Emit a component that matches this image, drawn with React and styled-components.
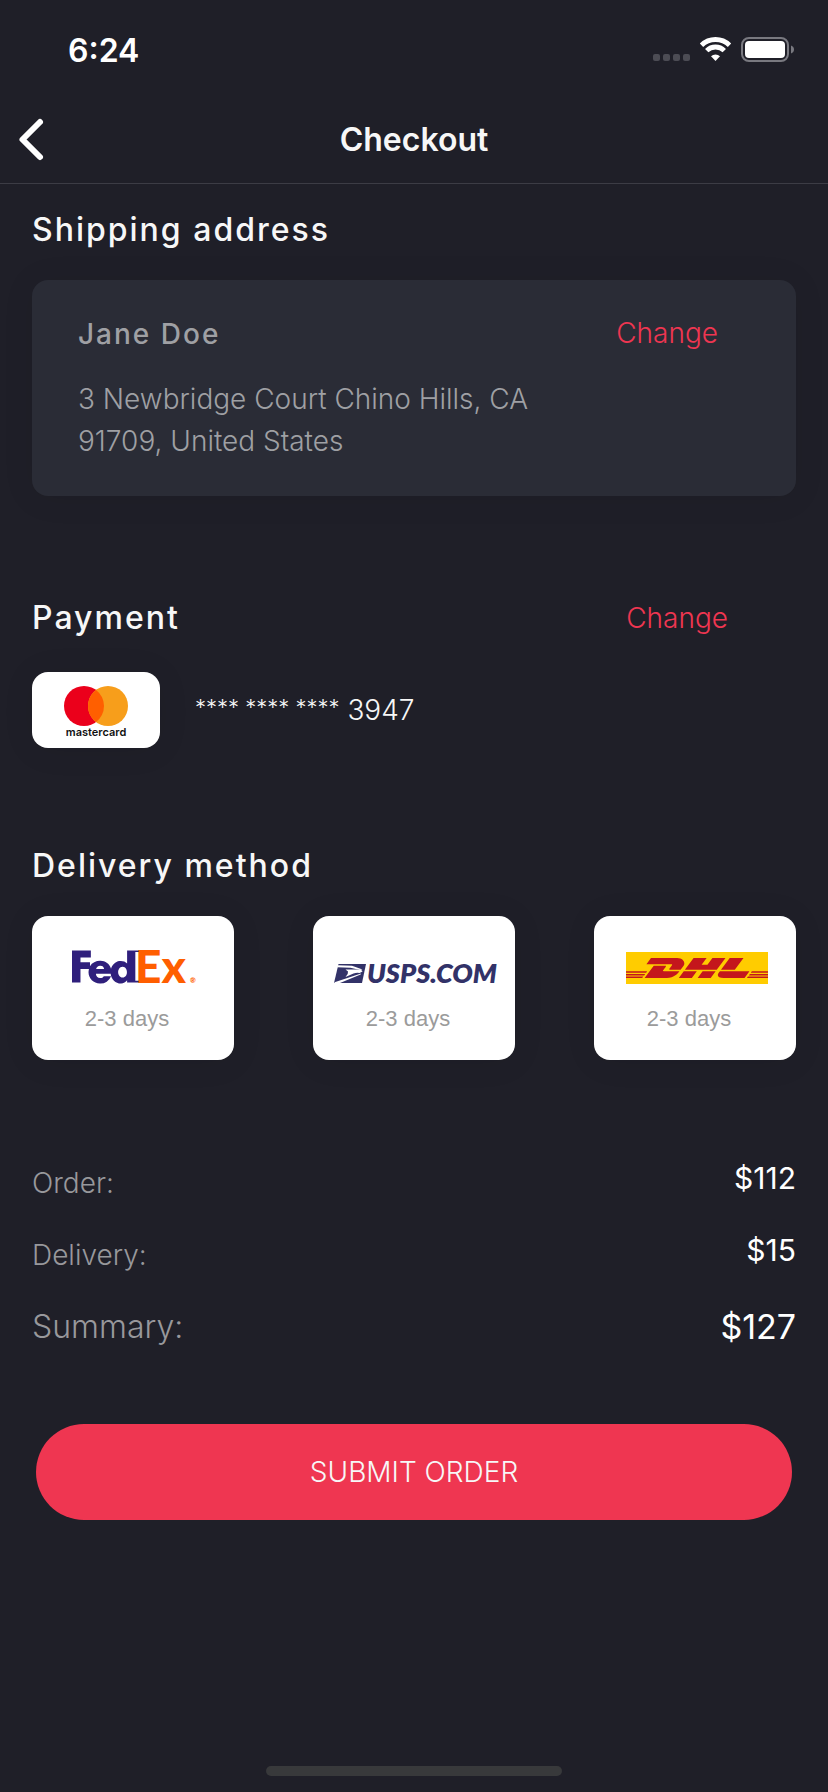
import React from "react";
import styled, { createGlobalStyle } from "styled-components";
import { SiDhl, SiFedex } from "react-icons/si";

const GlobalStyle = createGlobalStyle`
  *, *::before, *::after { box-sizing: border-box; }
  body {
    margin: 0;
    background: #1f1f28;
    color: #f7f7f7;
    font-family: Inter, "Liberation Sans", sans-serif;
  }
  h1, h2, p, dl, dt, dd { margin: 0; }
  button { padding: 0; border: 0; background: none; color: inherit; font: inherit; cursor: pointer; }
`;

const Screen = styled.div`
  display: flex;
  flex-direction: column;
  min-height: 100vh;
`;

const StatusBar = styled.div`
  display: flex;
  align-items: center;
  justify-content: space-between;
  height: 96px;
  padding: 4px 34px 0 68px;
  font-size: 32px;
  font-weight: 600;
  color: #fff;
`;

const StatusIcons = styled.svg`
  width: 142px;
  height: 28px;
`;

const Header = styled.header`
  display: grid;
  grid-template-columns: 64px 1fr 64px;
  align-items: center;
  height: 88px;
  border-bottom: 1px solid #3c3c45;
`;

const BackButton = styled.button`
  display: flex;
  align-items: center;
  height: 64px;
  padding-left: 16px;
`;

const Title = styled.h1`
  font-size: 32px;
  font-weight: 600;
  line-height: 40px;
  text-align: center;
`;

const Main = styled.main`
  display: flex;
  flex-direction: column;
  padding: 26px 32px 24px;
`;

const Section = styled.section`
  display: flex;
  flex-direction: column;
  gap: ${(p) => p.$gap || 30}px;
  margin-bottom: ${(p) => p.$after}px;
`;

const SectionHead = styled.div`
  display: flex;
  align-items: center;
  justify-content: space-between;
  padding-right: 68px;
`;

const SectionTitle = styled.h2`
  font-size: 32px;
  font-weight: 500;
  line-height: 40px;
  letter-spacing: 2px;
`;

const ChangeButton = styled.button`
  color: #ef3651;
  font-size: 28px;
  font-weight: 300;
  line-height: 34px;
`;

const AddressCard = styled.div`
  display: flex;
  flex-direction: column;
  gap: 26px;
  padding: 36px 78px 34px 46px;
  border-radius: 16px;
  background: #2a2c36;
  color: #9fa0a4;
  font-size: 28px;
  box-shadow: 0 2px 32px rgba(0, 0, 0, 0.08);
`;

const AddressTop = styled.div`
  display: flex;
  align-items: flex-start;
  justify-content: space-between;
`;

const Name = styled.p`
  font-weight: 500;
  line-height: 36px;
  letter-spacing: 2px;
`;

const Address = styled.p`
  max-width: 480px;
  font-weight: 300;
  line-height: 42px;
`;

const PaymentRow = styled.div`
  display: flex;
  align-items: center;
  gap: 35px;
`;

const PaymentCard = styled.div`
  display: flex;
  width: 128px;
  height: 76px;
  border-radius: 16px;
  background: #fff;
  box-shadow: 0 2px 32px rgba(0, 0, 0, 0.08);
`;

const CardNumber = styled.p`
  font-size: 28px;
  font-weight: 300;
  line-height: 36px;
`;

const Mask = styled.span`
  font-size: 22px;
  line-height: 30px;
  vertical-align: top;
`;

const Options = styled.div`
  display: flex;
  justify-content: space-between;
`;

const Option = styled.button`
  display: flex;
  flex-direction: column;
  align-items: center;
  width: 202px;
  height: 144px;
  border-radius: 16px;
  background: #fff;
  box-shadow: 0 2px 32px rgba(0, 0, 0, 0.08);
`;

const Logo = styled.svg`
  width: 202px;
  height: 88px;
`;

const Days = styled.span`
  padding-right: 12px;
  color: #9b9b9b;
  font: 22px/30px "Liberation Sans", Arial, sans-serif;
`;

const Totals = styled.dl`
  display: flex;
  flex-direction: column;
  gap: 30px;
  margin-bottom: 76px;
`;

const TotalRow = styled.div`
  display: flex;
  align-items: flex-start;
  justify-content: space-between;
  font-weight: 300;

  dt {
    color: #98989c;
    font-size: ${(p) => (p.$final ? 32 : 28)}px;
    line-height: 42px;
  }
  dd {
    color: #fff;
    font-size: ${(p) => (p.$final ? 34 : 30)}px;
    font-weight: 400;
    line-height: ${(p) => (p.$final ? 42 : 32)}px;
  }
`;

const SubmitButton = styled.button`
  height: 96px;
  margin: 0 4px;
  border-radius: 48px;
  background: #ef3651;
  color: #f7f7f7;
  font-size: 28px;
  font-weight: 300;
`;

const HomeBar = styled.div`
  width: 296px;
  height: 10px;
  margin: auto auto 16px;
  border-radius: 5px;
  background: #38393b;
`;

function FedexLogo() {
  return (
    <Logo viewBox="0 0 202 88" aria-label="FedEx">
      <svg x="40" y="0" width="67" height="88" overflow="hidden">
        <SiFedex x="0" y="-10" size={122} fill="#2f1f7c" />
      </svg>
      <g fontFamily="Lato, sans-serif" fontWeight="900" fill="#ff5e00">
        <text x="103" y="67" fontSize="46">
          Ex
        </text>
        <text x="158" y="67" fontSize="7">
          ®
        </text>
      </g>
    </Logo>
  );
}

function UspsLogo() {
  return (
    <Logo viewBox="0 0 202 88" fill="#323268">
      <path d="M25.500 48h27.500l-4 19h-28z" />
      <g fill="#fff">
        <path d="M25 49.200l14 .6 10.500 3.700-2.500.4-9.500-2.200-13.500-.4z" />
        <path d="M32.500 53.600h11.500q5 0 5.500 1.800l-3 1.600q-3-.6-6 .6l-8 3.400q3-2.600 2.500-5.400z" />
        <path d="M21.500 66.200L48 57.400l-.4 1.200L27 67h-5.500z" />
      </g>
      <text x="54" y="67" fontFamily="Lato, sans-serif" fontSize="27" fontWeight="800" fontStyle="italic">
        USPS.COM
      </text>
    </Logo>
  );
}

function DhlLogo() {
  return (
    <Logo viewBox="0 0 202 88" aria-label="DHL">
      <rect x="32" y="36" width="142" height="32" fill="#fc0" />
      <SiDhl x="32" y="-19" size={142} fill="#c4161c" />
    </Logo>
  );
}

const carriers = [
  { name: "FedEx", Mark: FedexLogo },
  { name: "USPS", Mark: UspsLogo },
  { name: "DHL", Mark: DhlLogo },
];

export default function App() {
  return (
    <Screen>
      <GlobalStyle />
      <StatusBar>
        <span>6:24</span>
        <StatusIcons viewBox="0 0 142 28" aria-hidden="true">
          <g fill="#4c4c54">
            <rect x="1" y="18" width="7" height="7" rx="2" />
            <rect x="11" y="18" width="7" height="7" rx="2" />
            <rect x="21" y="18" width="7" height="7" rx="2" />
            <rect x="31" y="18" width="7" height="7" rx="2" />
          </g>
          <g fill="none" stroke="#fff" strokeWidth="4.8">
            <path d="M49.5 9.2a20 20 0 0 1 28 0" />
            <path d="M54.7 14.6a12.6 12.6 0 0 1 17.6 0" />
          </g>
          <path d="M59 20.3a6.6 6.6 0 0 1 9 0L63.5 25z" fill="#fff" />
          <rect x="90" y="2" width="46" height="23" rx="7" fill="none" stroke="#797980" strokeWidth="2" />
          <rect x="93" y="5" width="40" height="17" rx="4" fill="#fff" />
          <path d="M139 9.5c4 1.2 4 6.8 0 8z" fill="#797980" />
        </StatusIcons>
      </StatusBar>

      <Header>
        <BackButton aria-label="Back">
          <svg width="32" height="48" viewBox="0 0 32 48" fill="none" stroke="#fff" strokeWidth="6" strokeLinecap="round" strokeLinejoin="round">
            <path d="M24 6L6.5 23.5L24 41" />
          </svg>
        </BackButton>
        <Title>Checkout</Title>
      </Header>

      <Main>
        <Section $after={102}>
          <SectionTitle>Shipping address</SectionTitle>
          <AddressCard>
            <AddressTop>
              <Name>Jane Doe</Name>
              <ChangeButton>Change</ChangeButton>
            </AddressTop>
            <Address>
              3 Newbridge Court Chino Hills, CA
              <br />
              91709, United States
            </Address>
          </AddressCard>
        </Section>

        <Section $gap={34} $after={98}>
          <SectionHead>
            <SectionTitle>Payment</SectionTitle>
            <ChangeButton>Change</ChangeButton>
          </SectionHead>
          <PaymentRow>
            <PaymentCard>
              <svg width="128" height="76" viewBox="0 0 128 76">
                <circle cx="52" cy="34" r="20" fill="#eb001b" />
                <circle cx="76" cy="34" r="20" fill="#f79e1b" />
                <path d="M64 18a20 20 0 0 1 0 32a20 20 0 0 1 0-32z" fill="#ff5f00" />
                <text x="64" y="64" textAnchor="middle" fontFamily="Inter, sans-serif" fontSize="11" fontWeight="600" fill="#111">
                  mastercard
                </text>
              </svg>
            </PaymentCard>
            <CardNumber>
              <Mask>**** **** ****</Mask> 3947
            </CardNumber>
          </PaymentRow>
        </Section>

        <Section $after={102}>
          <SectionTitle>Delivery method</SectionTitle>
          <Options>
            {carriers.map(({ name, Mark }) => (
              <Option key={name}>
                <Mark />
                <Days>2-3 days</Days>
              </Option>
            ))}
          </Options>
        </Section>

        <Totals>
          <TotalRow>
            <dt>Order:</dt>
            <dd>$112</dd>
          </TotalRow>
          <TotalRow>
            <dt>Delivery:</dt>
            <dd>$15</dd>
          </TotalRow>
          <TotalRow $final>
            <dt>Summary:</dt>
            <dd>$127</dd>
          </TotalRow>
        </Totals>

        <SubmitButton>SUBMIT ORDER</SubmitButton>
      </Main>
      <HomeBar />
    </Screen>
  );
}
